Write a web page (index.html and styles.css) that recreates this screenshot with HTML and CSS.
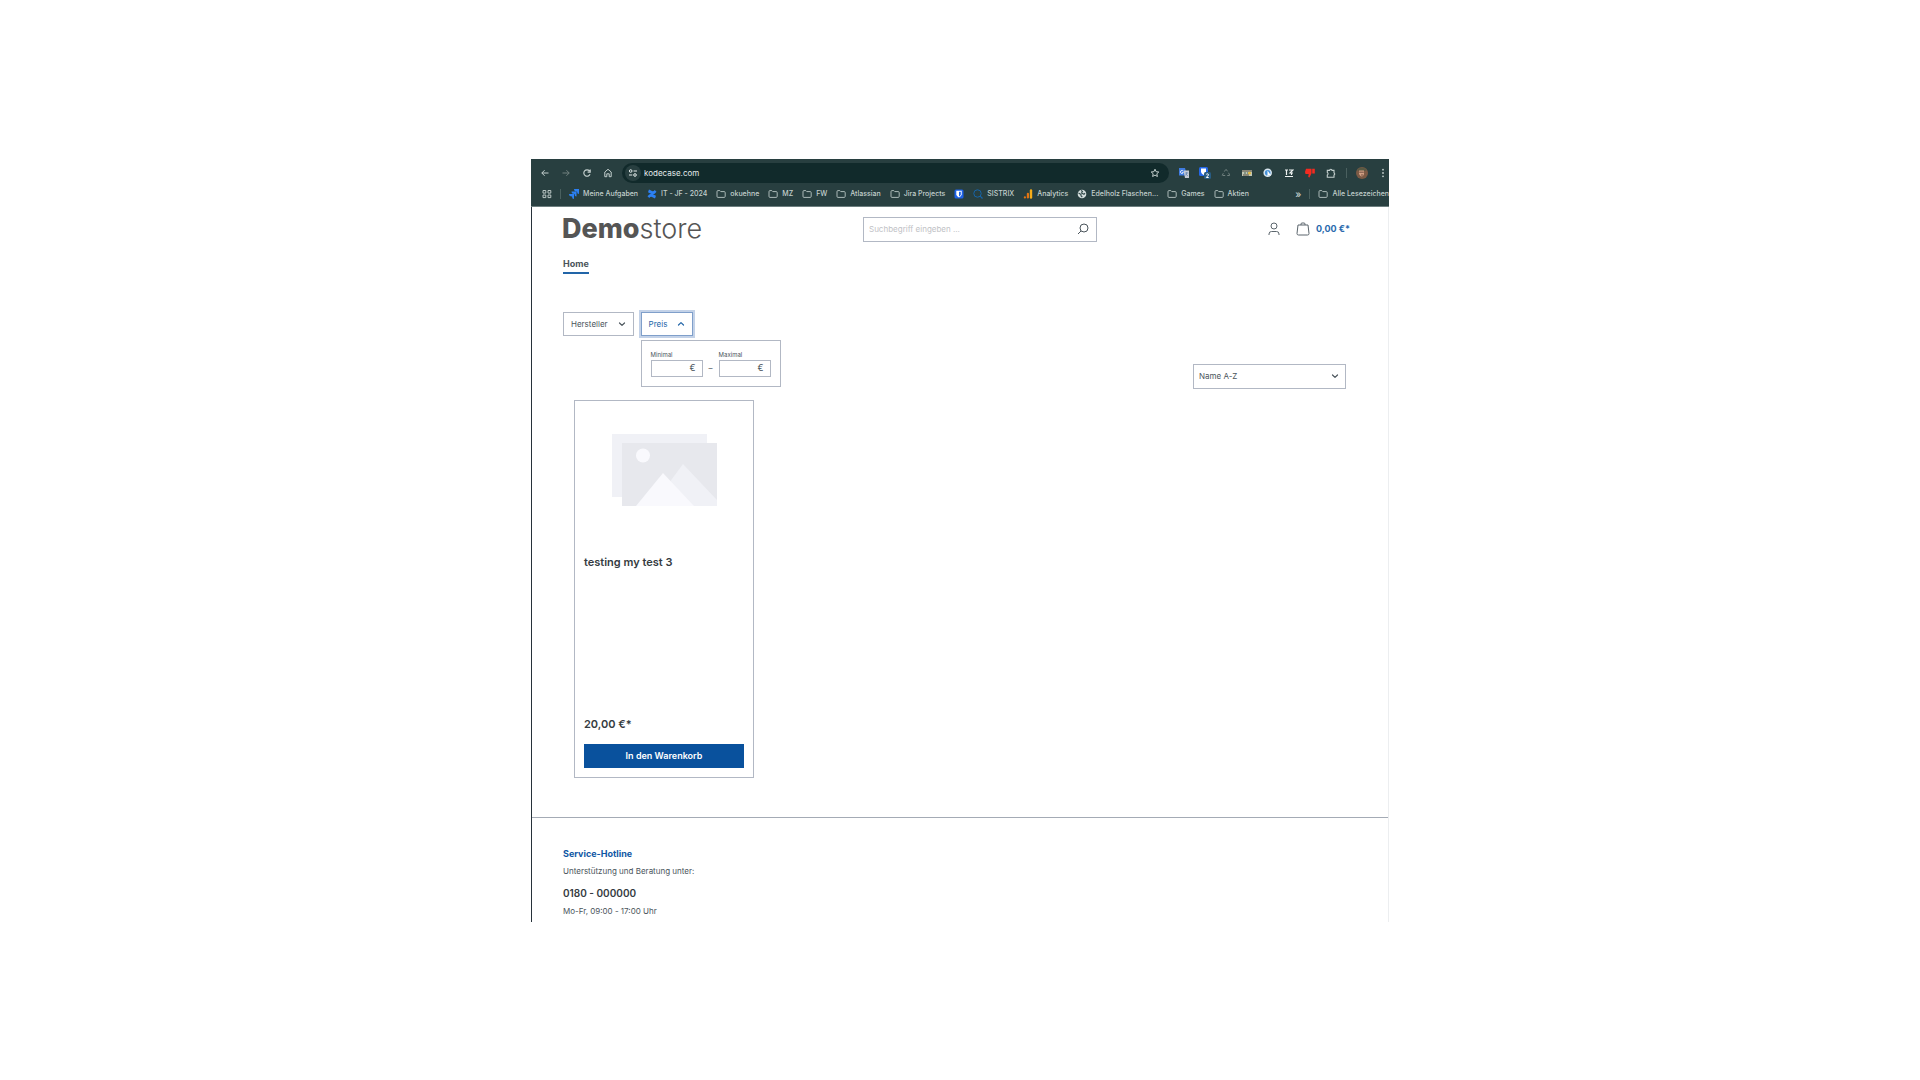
FILE: index.html
```html
<!DOCTYPE html>
<html lang="de">
<head>
<meta charset="utf-8">
<title>Demostore</title>
<link rel="stylesheet" href="styles.css">
</head>
<body>
<svg class="sprite" aria-hidden="true">
  <symbol id="folder" viewBox="0 0 10 10"><path d="M1 2.6Q1 1.6 2 1.6H3.8L4.8 2.6H8.2Q9.2 2.6 9.2 3.6V7.4Q9.2 8.4 8.2 8.4H2Q1 8.4 1 7.4Z" fill="none" stroke="#b9c6c4" stroke-width=".9"/></symbol>
  <symbol id="down" viewBox="0 0 8 8"><path d="M1.5 3 4 5.4 6.5 3" fill="none" stroke="currentColor" stroke-width="1.2" stroke-linecap="round" stroke-linejoin="round"/></symbol>
</svg>
<div class="window">
  <header class="browser">
    <div class="toolbar">
      <nav class="controls" aria-label="Navigation">
        <button class="tool" aria-label="Zurück"><svg viewBox="0 0 10 10"><path d="M8.5 5H1.8M4.6 2.2 1.8 5l2.8 2.8"/></svg></button>
        <button class="tool tool-off" aria-label="Vorwärts"><svg viewBox="0 0 10 10"><path d="M1.5 5h6.7M5.4 2.2 8.2 5 5.4 7.8"/></svg></button>
        <button class="tool" aria-label="Neu laden"><svg viewBox="0 0 10 10"><path d="M8 6.2A3.2 3.2 0 1 1 7.5 3M8.2 1.5v2.6H5.6" stroke-width="1.2"/></svg></button>
        <button class="tool" aria-label="Startseite"><svg viewBox="0 0 10 10"><path d="M1.8 4 5 1.3 8.2 4v4.7H6.2V5.8H3.8v2.9h-2z"/></svg></button>
      </nav>
      <div class="address">
        <span class="site"><svg viewBox="0 0 10 10"><path d="M5.5 3H9M1 7h3.3"/><circle cx="2.7" cy="3" r="1.3"/><circle cx="7" cy="7" r="1.3"/></svg></span>
        <input class="url" type="text" value="kodecase.com" aria-label="Adresse">
        <button class="tool" aria-label="Lesezeichen"><svg viewBox="0 0 10 10"><path d="m5 1.2 1.1 2.5 2.7.3-2 1.8.6 2.7L5 7.1 2.6 8.5l.6-2.7-2-1.8 2.7-.3z"/></svg></button>
      </div>
      <div class="extensions">
        <button class="tool" aria-label="Übersetzer"><svg viewBox="0 0 10 10" class="solid"><path fill="#3f7be0" d="M0 0h6l2 7.5H0z"/><path fill="#c5cbd4" d="M4.5 2.5H10V10H6z"/><path d="M4.2 3.2A1.5 1.5 0 1 0 4.3 4.6H3" fill="none" stroke="#fff" stroke-width=".8"/><path d="M6.2 5h3M7.7 4v1c0 1-.7 2-1.5 2.5M6.8 6l2 2" fill="none" stroke="#5f7fae" stroke-width=".7"/></svg></button>
        <button class="tool" aria-label="Passwörter"><svg viewBox="0 0 12 12" class="solid badge-icon"><rect width="9" height="9" rx="1.5" fill="#2467e8"/><path d="M2 1.5h5v3C7 6.5 4.5 8 4.5 8S2 6.500 2 4.500z" fill="#fff"/><rect x="5" y="5" width="7" height="7" rx="1.500" fill="#285c83"/><path d="M7.200 7.500c.5-1 2.500-.8 2.300.5L7.300 10.500h2.400" fill="none" stroke="#fff"/></svg></button>
        <button class="tool tool-off" aria-label="Recycling"><svg viewBox="0 0 10 10"><path d="M3.300 3.600 5 1.200l1.700 2.400M7.600 4.800l1.200 2.700H6.200M4.200 7.500h-3l1.300-2.700" stroke-dasharray="2.500 .5"/></svg></button>
        <button class="tool" aria-label="JSON"><svg viewBox="0 0 10 10" class="solid"><rect y="2" width="10" height="6" fill="#c2c6b4"/><path d="M0 3h10M1 7h6" stroke="#504b3c"/><path d="M2 5h2M5 5h1" stroke="#42655a"/><circle cx="7.500" cy="5.200" r="1.400" fill="#e2b83b"/></svg></button>
        <button class="tool" aria-label="Tempo"><svg viewBox="0 0 10 10" class="solid"><circle cx="4.700" cy="4.700" r="4.300" fill="#d9e6ef"/><circle cx="4.700" cy="4.700" r="2.800" fill="#4793d9"/><path d="M4.500 2.500v6L6 7l2 .5z" fill="#fff"/></svg></button>
        <button class="tool" aria-label="Textwerkzeug"><svg viewBox="0 0 10 10"><path d="M1 2h3M2.500 2v5M5 2h4L6 5h3M1 8.500h8M7.500 5v2" stroke="#eef3f2" stroke-width="1.200"/></svg></button>
        <button class="tool" aria-label="Bewertung"><svg viewBox="0 0 10 10" class="solid"><path fill="#f32b20" d="M1 .8h5.500v4.400L4.500 9.500 3.200 9l.5-3H.5L0 4zM7.200.8h2.600v4.700H7.200z"/></svg></button>
        <button class="tool" aria-label="Erweiterungen"><svg viewBox="0 0 10 10"><path d="M1.300 2.400h2.300a1.200 1.200 0 0 1 2.400 0h2v2.400a1.200 1.200 0 0 1 0 2.200v2.200H1.300V7a1.400 1.400 0 0 0 0-2.500z" stroke-width="1.100"/></svg></button>
        <span class="rule"></span>
        <button class="tool" aria-label="Profil"><svg viewBox="0 0 12 12" class="solid avatar"><circle cx="6" cy="6" r="6" fill="#7c5a45"/><path d="M1 3q5-5 10 0L9 4 3 4z" fill="#5a5a44"/><path d="M3 3.500h5V7Q6 12 3 7z" fill="#d2a083"/><path d="M3.200 5.200h4.600M5 8h2" stroke="#5b3e35" stroke-width=".8"/></svg></button>
        <button class="tool" aria-label="Menü"><svg viewBox="0 0 10 10" class="solid"><g fill="#c3cfcd"><circle cx="5" cy="1.700" r=".9"/><circle cx="5" cy="5" r=".9"/><circle cx="5" cy="8.300" r=".9"/></g></svg></button>
      </div>
    </div>
    <nav class="bookmarks" aria-label="Lesezeichen">
      <a class="bookmark" href="#" aria-label="Apps"><svg viewBox="0 0 10 10"><path d="M1 1.500h2.800v2.600H1zM6 1.500h2.800v2.600H6zM1 6h2.800v2.600H1zM6 6h2.800v2.600H6z" fill="none" stroke="#b9c6c4"/></svg></a>
      <span class="rule"></span>
      <a class="bookmark" href="#"><svg viewBox="0 0 10 10"><path d="M5 0h5v5Q8 5 8 2.500 5 2.500 5 0zM2.500 2.500h5v5q-2 0-2-2.500-3 0-3-2.500zM0 5h5v5Q3 10 3 7.500 0 7.500 0 5z" fill="#2c80f3"/></svg>Meine Aufgaben</a>
      <a class="bookmark" href="#"><svg viewBox="0 0 10 10"><path d="M.5 7.200Q3 3.500 6 5.200L9 6.700 8 9.500 5 8Q3.500 7.200 2.300 9zM9.500 2.800Q7 6.500 4 4.800L1 3.300 2 .5 5 2Q6.500 2.800 7.700 1z" fill="#2c80f3"/></svg>IT - JF - 2024</a>
      <a class="bookmark" href="#"><svg><use href="#folder"/></svg>okuehne</a>
      <a class="bookmark" href="#"><svg><use href="#folder"/></svg>MZ</a>
      <a class="bookmark" href="#"><svg><use href="#folder"/></svg>FW</a>
      <a class="bookmark" href="#"><svg><use href="#folder"/></svg>Atlassian</a>
      <a class="bookmark" href="#"><svg><use href="#folder"/></svg>Jira Projects</a>
      <a class="bookmark" href="#" aria-label="Bitwarden"><svg viewBox="0 0 10 10"><rect x=".5" y=".5" width="9" height="9" rx="1.500" fill="#1d62e8"/><path d="M2.300 1.800h5.400v3.500Q7.700 7 5 8.600 2.300 7 2.300 5.300z" fill="#fff"/><path d="M5 2.700h1.800v2.600Q6.800 6.500 5 7.600z" fill="#1d62e8"/></svg></a>
      <a class="bookmark" href="#"><svg viewBox="0 0 10 10"><circle cx="4.500" cy="4.500" r="3.700" fill="none" stroke="#1764a8"/><path d="M7.200 7.200 9.500 9.500" stroke="#1764a8" stroke-width="1.200"/></svg>SISTRIX</a>
      <a class="bookmark" href="#"><svg viewBox="0 0 10 10"><path d="M8 1.500v7" stroke="#f5ac19" stroke-width="2.400" stroke-linecap="round"/><path d="M4.900 4.800v3.700M1.900 8.300v.2" stroke="#e57412" stroke-width="2.200" stroke-linecap="round"/></svg>Analytics</a>
      <a class="bookmark" href="#"><svg viewBox="0 0 10 10"><circle cx="5" cy="5" r="4.300" fill="#d4dddc"/><path d="M1.500 4 4 5.500v1.300L5.300 8M4 1.500l1.500 1L4.500 4 7 5.300 8 4.200" fill="none" stroke="#31494a" stroke-width="1.100"/></svg>Edelholz Flaschen...</a>
      <a class="bookmark" href="#"><svg><use href="#folder"/></svg>Games</a>
      <a class="bookmark" href="#"><svg><use href="#folder"/></svg>Aktien</a>
      <button class="more" aria-label="Weitere Lesezeichen">»</button>
      <span class="rule"></span>
      <a class="bookmark" href="#"><svg><use href="#folder"/></svg>Alle Lesezeichen</a>
    </nav>
  </header>

  <div class="shop">
    <header class="shop-header">
      <a class="logo" href="#"><b>Demo</b>store</a>
      <form class="search">
        <input type="search" placeholder="Suchbegriff eingeben ..." aria-label="Suchbegriff">
        <button class="search-button" type="button" aria-label="Suchen"><svg viewBox="0 0 12 12"><circle cx="7" cy="5" r="4"/><path d="M4 8 1 11"/></svg></button>
      </form>
      <div class="account">
        <a class="account-link" href="#" aria-label="Konto"><svg viewBox="0 0 12 14"><circle cx="6" cy="4" r="3"/><path d="M1 13v-1q0-2.500 2.500-2.500h5Q11 9.500 11 12v1"/></svg></a>
        <a class="cart" href="#"><svg viewBox="0 0 14 14"><path d="M2 3h10l1 8.500q0 1.500-1.500 1.500h-9Q1 13 1 11.500zM5 3V2q0-1 1-1h2q1 0 1 1v1"/></svg>0,00 €*</a>
      </div>
    </header>
    <nav class="menu"><a class="menu-link" href="#">Home</a></nav>

    <main class="listing">
      <div class="filters">
        <button class="filter">Hersteller<svg><use href="#down"/></svg></button>
        <div class="filter-group">
          <button class="filter filter-open" aria-expanded="true">Preis<svg class="up"><use href="#down"/></svg></button>
          <div class="price-menu">
            <label class="price">Minimal<span class="price-box"><input type="text">€</span></label>
            <span class="dash">–</span>
            <label class="price">Maximal<span class="price-box"><input type="text">€</span></label>
          </div>
        </div>
      </div>
      <div class="sorting">
        <select aria-label="Sortierung"><option>Name A-Z</option></select>
        <svg><use href="#down"/></svg>
      </div>
      <article class="card">
        <svg class="placeholder" viewBox="0 0 105 72"><path fill="#f0f1f6" d="M0 0h95v63H0z"/><path fill="#e7e8ed" d="M10 9h95v63H10z"/><path fill="#f0f1f6" d="m71 30 34 36v6H40z"/><path fill="#f9f9fd" d="m51 39 31 33H24z"/><circle cx="31" cy="21.500" r="7" fill="#f9f9fd"/></svg>
        <h2 class="name">testing my test 3</h2>
        <p class="cost">20,00 €*</p>
        <button class="buy">In den Warenkorb</button>
      </article>
    </main>

    <footer class="footer">
      <h3 class="hotline">Service-Hotline</h3>
      <p>Unterstützung und Beratung unter:</p>
      <a class="phone" href="#">0180 - 000000</a>
      <p>Mo-Fr, 09:00 - 17:00 Uhr</p>
    </footer>
  </div>
</div>
</body>
</html>
```

FILE: styles.css
```css
* { box-sizing: border-box; }
body {
  margin: 0;
  min-height: 100vh;
  display: flex;
  align-items: center;
  justify-content: center;
  background: #fff;
  color: #4a545b;
  font: 8px/12px Inter, "Liberation Sans", sans-serif;
}
button, input, select { font: inherit; color: inherit; border: 0; padding: 0; background: none; border-radius: 0; outline: 0; }
a { color: inherit; text-decoration: none; }
h2, h3, p { margin: 0; }
svg { flex: none; }
.sprite { position: absolute; width: 0; height: 0; }

.window { width: 100%; max-width: 858px; overflow: hidden; }

/* browser bar */
.browser { background: #283f40; color: #c3cfcd; border-bottom: 1px solid #6d7e7f; }
.toolbar { display: flex; align-items: center; padding: 4px 0 0 9px; }
.controls { display: flex; gap: 11px; }
.tool { display: flex; align-items: center; justify-content: center; width: 10px; height: 12px; color: #c3cfcd; }
.tool svg { width: 10px; height: 10px; fill: none; stroke: currentColor; }
.tool svg.solid { stroke: none; }
.tool svg.badge-icon, .tool svg.avatar { width: 12px; height: 12px; }
.tool-off { color: #71817f; }
.address { flex: 1; display: flex; align-items: center; height: 20px; margin-left: 9px; padding: 0 9px 0 3px; border-radius: 10px; background: #112a2b; color: #e4eceb; }
.site { display: flex; align-items: center; justify-content: center; width: 16px; height: 16px; border-radius: 50%; background: #283f40; }
.site svg { width: 10px; height: 10px; fill: none; stroke: currentColor; }
.url { flex: 1; min-width: 0; margin-left: 3px; }
.extensions { display: flex; align-items: center; gap: 11px; padding-left: 10px; margin-right: 1px; }
.rule { width: 1px; height: 10px; background: #4a605f; }
.extensions .rule { margin: 0 -1px; }
.bookmarks { display: flex; align-items: center; gap: 9px; height: 23px; padding-left: 11px; font-size: 7px; font-weight: 500; white-space: nowrap; }
.bookmark { display: flex; align-items: center; gap: 4px; }
.bookmark svg { width: 10px; height: 10px; }
.bookmarks .rule { margin: 0 -1px; }
.more { margin-left: auto; font-size: 10px; }

/* shop */
.shop { border-left: 1px solid #27323a; border-right: 1px solid #eceef0; }
.shop-header { display: grid; grid-template-columns: 301px 234px 1fr; align-items: center; padding: 10px 38px 0 30px; }
.logo { color: #555; font-size: 27px; line-height: 24px; font-weight: 300; }
.logo b { font-weight: 800; }
.search { display: flex; height: 25px; border: 1px solid #b2b8c4; }
.search input { flex: 1; min-width: 0; padding: 0 5px; }
.search input::placeholder { color: #bfc2c6; opacity: 1; }
.search-button { display: flex; align-items: center; padding: 0 7px; }
.search svg { width: 12px; height: 12px; fill: none; stroke: #4a545b; }
.account { display: flex; align-items: center; justify-content: flex-end; gap: 15px; }
.account svg { width: 14px; height: 14px; fill: none; stroke: #5b656c; }
.account-link { display: flex; }
.cart { display: flex; align-items: center; gap: 6px; color: #2a69ad; font-size: 9px; line-height: 14px; font-weight: 700; }
.menu { padding: 15px 31px 0; }
.menu-link { display: inline-block; height: 17px; border-bottom: 2px solid #2265a8; font-size: 9px; line-height: 14px; font-weight: 700; }

.listing { padding: 38px 42px 39px; }
.filters { display: flex; gap: 7px; margin-left: -11px; }
.filter { display: flex; align-items: center; gap: 10px; height: 24px; padding: 0 7px; border: 1px solid #b2b8c4; }
.filter svg { width: 8px; height: 8px; }
.filter-open { border-color: #7f9fca; box-shadow: 0 0 0 2px #c3d2e8; color: #2265a8; }
.up { transform: rotate(180deg); }
.filter-group { position: relative; }
.price-menu { position: absolute; top: 28px; left: 0; display: flex; gap: 6px; padding: 9px; border: 1px solid #b2b8c4; background: #fff; }
.price { font-size: 6px; line-height: 10px; }
.price-box { display: flex; align-items: center; width: 52px; height: 17px; padding-right: 6px; border: 1px solid #b2b8c4; font-size: 9px; }
.price-box input { flex: 1; min-width: 0; }
.dash { padding-top: 12px; font-size: 8px; }
.sorting { display: flex; align-items: center; width: 153px; margin: 28px 0 0 auto; }
.sorting select { flex: 1; height: 25px; padding: 0 5px; border: 1px solid #b2b8c4; appearance: none; }
.sorting svg { width: 8px; height: 8px; margin: 0 7px 0 -15px; }

.card { display: flex; flex-direction: column; width: 180px; min-height: 378px; margin-top: 11px; padding: 33px 9px 9px; border: 1px solid #b2b8c4; }
.placeholder { width: 105px; height: 72px; align-self: center; }
.name { margin-top: 48px; color: #343b41; font-size: 11px; line-height: 16px; font-weight: 600; }
.cost { margin-top: auto; color: #343b41; font-size: 11px; line-height: 16px; font-weight: 600; }
.buy { height: 24px; margin-top: 12px; background: #09519d; color: #fff; font-size: 9px; font-weight: 600; }

.footer { display: flex; flex-direction: column; align-items: flex-start; padding: 29px 31px 5px; border-top: 1px solid #a4abb5; }
.hotline { color: #0f57a4; font-size: 9px; line-height: 14px; font-weight: 700; margin-bottom: 4px; }
.phone { margin: 9px 0 5px; color: #343b41; font-size: 10px; line-height: 14px; font-weight: 600; }
```
